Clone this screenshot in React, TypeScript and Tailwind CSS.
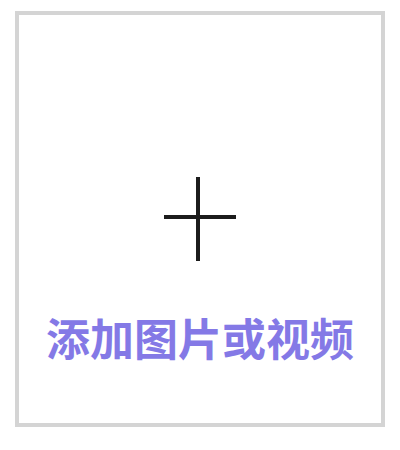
export default function App() {
  return (
    <div className="w-[400px] h-[450px] bg-white pt-[11px] pl-[15px]">
      <div className="w-[370px] h-[416px] border-4 border-[#d4d4d4] bg-white flex flex-col items-center pt-[162px]">
        <svg width="72" height="84" viewBox="0 0 72 84" className="ml-[-1px]">
          <line x1="34" y1="0" x2="34" y2="84" stroke="#1c1c1c" strokeWidth="4" />
          <line x1="0" y1="40" x2="72" y2="40" stroke="#1c1c1c" strokeWidth="4" />
        </svg>
        <div
          className="mt-[54px] text-[44px] leading-none font-bold text-[#8479e6]"
          style={{ fontFamily: '"Noto Sans CJK SC", sans-serif' }}
        >
          添加图片或视频
        </div>
      </div>
    </div>
  );
}
